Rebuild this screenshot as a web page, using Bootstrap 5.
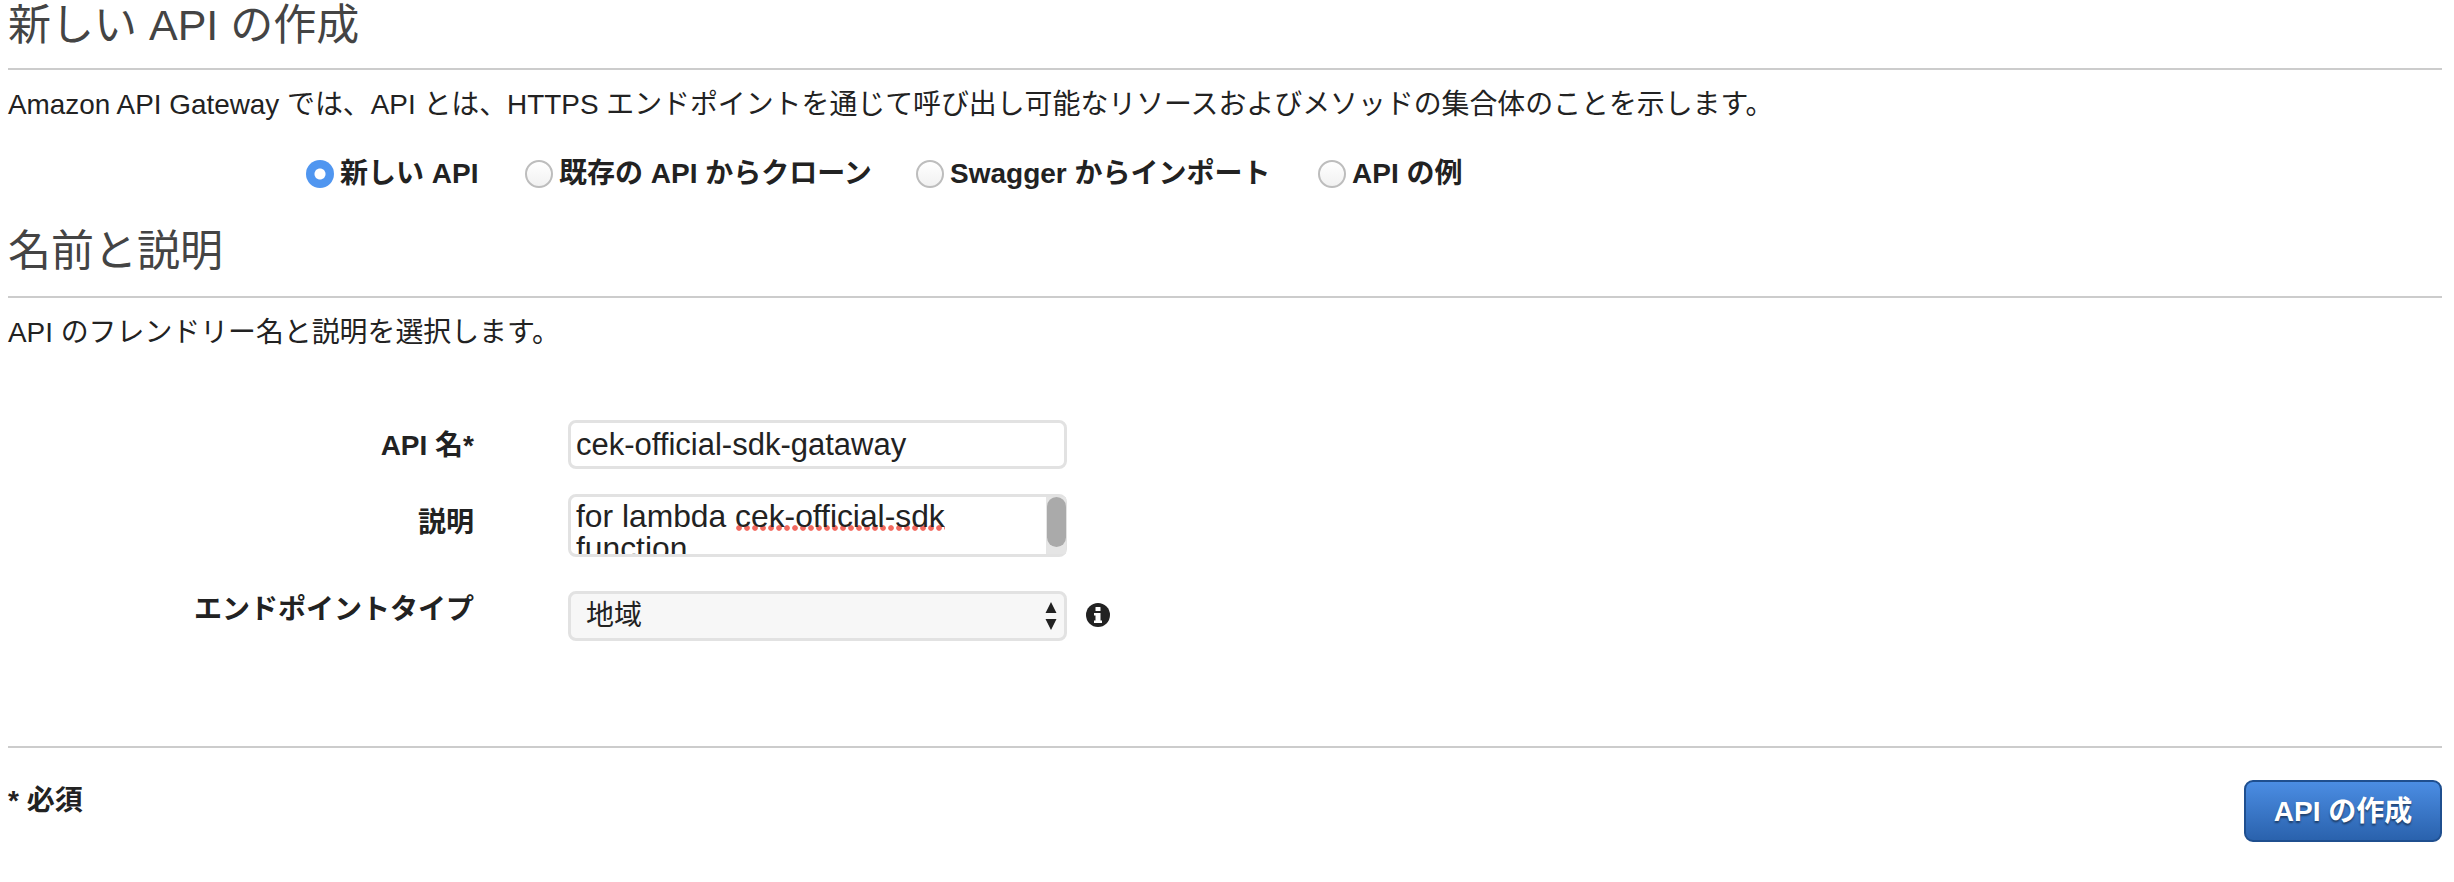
<!DOCTYPE html>
<html lang="ja">
<head>
<meta charset="utf-8">
<title>新しい API の作成</title>
<link rel="stylesheet" href="https://cdn.jsdelivr.net/npm/bootstrap@5.3.0/dist/css/bootstrap.min.css">
<style>
html, body { height: 100%; }
body { background: #fff; color: #222; font-family: "Liberation Sans", "Noto Sans CJK JP", sans-serif; font-size: 28px; overflow: hidden; }
.page-wrap { padding: 0 12px 0 8px; }
.sec-title { font-size: 43px; font-weight: 400; line-height: 46px; color: #444; margin: 0; padding: 2px 0 20px; border-bottom: 2px solid #ccc; }
.sec-title-next { margin-top: 34px; padding: 0 0 22px; }
.sec-desc { font-size: 27.9px; line-height: 42px; margin: 14px 0 0; }
.radio-row { margin-top: 28px; height: 40px; padding-left: 298px; }
.radio-item { display: flex; align-items: center; gap: 6px; margin: 0; padding: 0; min-height: 0; font-weight: 700; white-space: nowrap; }
.radio-item .form-check-input { float: none; margin: 0; width: 28px; height: 28px; flex: none; border: 2px solid #bdbdbd; background: linear-gradient(#fff, #f1f1f1); box-shadow: none; }
.radio-item .form-check-input:checked { border: 0; background: radial-gradient(circle, #fff 0 5px, #5096f0 6px); }
.r-1 { width: 219px; } .r-2 { width: 391px; } .r-3 { width: 402px; }
.api-form { margin-top: 66px; }
.field-row { display: flex; align-items: flex-start; }
.field-label { width: 466px; flex: none; text-align: right; font-weight: 700; margin: 0; padding: 0; line-height: 40px; }
.lab-name { padding-top: 6px; }
.lab-note { padding-top: 9px; }
.lab-type { margin-top: -1px; }
.field-box { width: 499px; margin-left: 94px; flex: none; }
.form-control.text-box, .form-select.sel-box { font-size: 28px; color: #222; border: 3px solid #e2e2e2; border-radius: 8px; box-shadow: none; }
.form-control.text-box { font-size: 31px; height: 49px; padding: 0 5px; line-height: 40px; }
.note-wrap { height: 63px; overflow: hidden; }
.form-control.note-box { height: 63px; overflow: hidden; font-size: 31.8px; line-height: 32px; padding: 3px 24px 0 5px; white-space: normal; }
.scroll-track { top: 3px; bottom: 3px; right: 1px; width: 20px; background: #e5e5e5; }
.scroll-thumb { top: 0; right: 0; width: 19px; height: 50px; background: #aaa; border-radius: 10px; }
.spell-mark { background: radial-gradient(circle, #f26a60 0 2.4px, transparent 3.2px) 0 calc(100% - 3px) / 8px 6px repeat-x; }
.sel-box { height: 50px; padding: 0 40px 0 15px; background-color: #f7f7f7; background-image: url("data:image/svg+xml,%3Csvg xmlns='http://www.w3.org/2000/svg' width='12' height='30'%3E%3Cpath d='M6 1l5.500 11H.5zM6 29L.5 18h11z' fill='%23222'/%3E%3C/svg%3E"); background-position: right 7px center; background-size: 12px 30px; }
.info-mark { width: 24px; height: 24px; margin: 12px 0 0 19px; flex: none; }
.row-second { margin-top: 25px; }
.row-third { margin-top: 34px; }
.foot-rule { border-top: 2px solid #ccc; margin-top: 105px; padding-top: 32px; }
.req-note { font-weight: 700; line-height: 42px; }
.btn.make-btn { width: 198px; height: 62px; padding: 2px 0 0; font-size: 28px; font-weight: 700; color: #fff; border: 2px solid #1f4f8f; border-radius: 9px; background: linear-gradient(#4b8de3, #2a62ad); text-shadow: 0 2px 2px rgba(0,0,0,.45); }
</style>
</head>
<body>
<div class="page-wrap">
  <h2 class="sec-title">新しい API の作成</h2>
  <p class="sec-desc">Amazon API Gateway では、API とは、HTTPS エンドポイントを通じて呼び出し可能なリソースおよびメソッドの集合体のことを示します。</p>
  <div class="radio-row d-flex align-items-center">
    <label class="form-check radio-item r-1"><input class="form-check-input" type="radio" name="mode" checked>新しい API</label>
    <label class="form-check radio-item r-2"><input class="form-check-input" type="radio" name="mode">既存の API からクローン</label>
    <label class="form-check radio-item r-3"><input class="form-check-input" type="radio" name="mode">Swagger からインポート</label>
    <label class="form-check radio-item"><input class="form-check-input" type="radio" name="mode">API の例</label>
  </div>
  <h2 class="sec-title sec-title-next">名前と説明</h2>
  <p class="sec-desc">API のフレンドリー名と説明を選択します。</p>
  <form class="api-form">
    <div class="field-row">
      <label class="field-label lab-name" for="api-name">API 名*</label>
      <div class="field-box"><input id="api-name" class="form-control text-box" type="text" value="cek-official-sdk-gataway"></div>
    </div>
    <div class="field-row row-second">
      <label class="field-label lab-note">説明</label>
      <div class="field-box position-relative note-wrap">
        <div class="form-control text-box note-box" role="textbox">for lambda <span class="spell-mark">cek-official-sdk</span> function</div>
        <div class="scroll-track position-absolute"><div class="scroll-thumb position-absolute"></div></div>
      </div>
    </div>
    <div class="field-row row-third">
      <label class="field-label lab-type" for="ep-type">エンドポイントタイプ</label>
      <div class="field-box"><select id="ep-type" class="form-select sel-box"><option>地域</option></select></div>
      <svg class="info-mark" viewBox="0 0 24 24" aria-hidden="true"><circle cx="12" cy="12" r="12" fill="#222"/><rect x="9.500" y="4" width="5" height="4" rx=".6" fill="#fff"/><path d="M8 10h6.500v7.500H16V20H8v-2.500h1.500V12.500H8z" fill="#fff"/></svg>
    </div>
  </form>
  <div class="foot-rule d-flex justify-content-between align-items-start">
    <div class="req-note">* 必須</div>
    <button type="button" class="btn make-btn">API の作成</button>
  </div>
</div>
<script src="https://cdn.jsdelivr.net/npm/bootstrap@5.3.0/dist/js/bootstrap.bundle.min.js"></script>
</body>
</html>
